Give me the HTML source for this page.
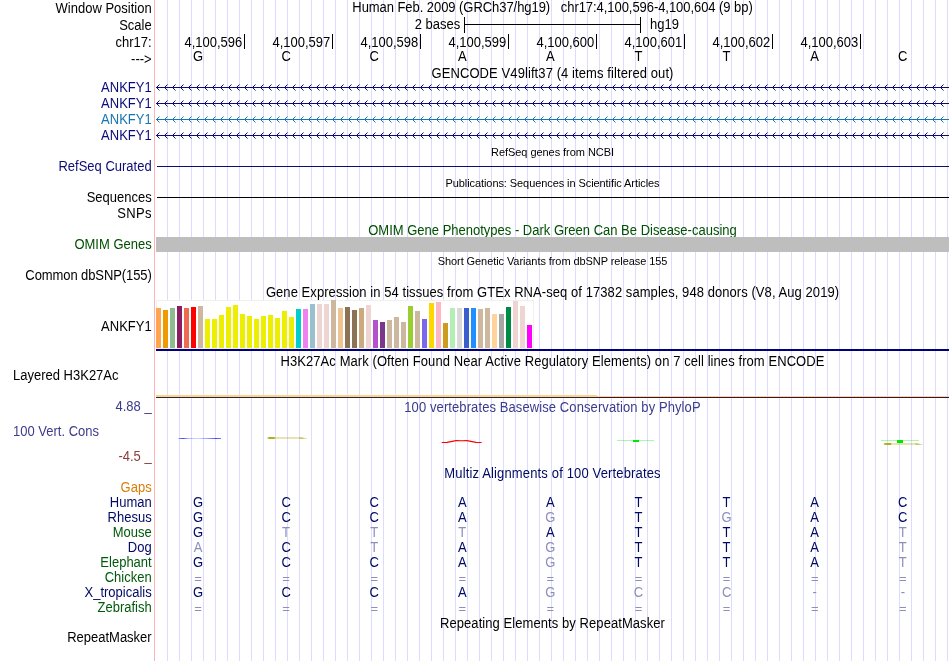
<!DOCTYPE html>
<html lang="en"><head><meta charset="utf-8"><title>UCSC Genome Browser chr17:4,100,596-4,100,604</title>
<style>
html,body{margin:0;padding:0;background:#fff;}
#c{will-change:transform;position:relative;width:950px;height:661px;overflow:hidden;background:#fff;font-family:"Liberation Sans",sans-serif;font-size:13px;color:#000;}
.t{position:absolute;white-space:pre;line-height:16px;height:16px;transform:scaleY(1.07);transform-origin:50% 12px;}
.r{text-align:right;left:0;width:151.7px;}
.c{text-align:center;left:155.5px;width:794px;}
.s{font-size:11px;transform-origin:50% 11px;}
.b{position:absolute;}
.g{position:absolute;top:0;width:1px;height:661px;background:#dcdcff;}
.l{width:12px;margin-left:-6px;text-align:center;}
.n{transform:none;}
svg{position:absolute;left:0;top:0;}
</style></head>
<body><div id="c">
<i class="g" style="left:167px"></i><i class="g" style="left:179px"></i><i class="g" style="left:191px"></i><i class="g" style="left:203px"></i><i class="g" style="left:215px"></i><i class="g" style="left:227px"></i><i class="g" style="left:239px"></i><i class="g" style="left:251px"></i><i class="g" style="left:263px"></i><i class="g" style="left:275px"></i><i class="g" style="left:287px"></i><i class="g" style="left:299px"></i><i class="g" style="left:311px"></i><i class="g" style="left:323px"></i><i class="g" style="left:335px"></i><i class="g" style="left:347px"></i><i class="g" style="left:359px"></i><i class="g" style="left:371px"></i><i class="g" style="left:383px"></i><i class="g" style="left:395px"></i><i class="g" style="left:407px"></i><i class="g" style="left:419px"></i><i class="g" style="left:431px"></i><i class="g" style="left:443px"></i><i class="g" style="left:455px"></i><i class="g" style="left:467px"></i><i class="g" style="left:479px"></i><i class="g" style="left:491px"></i><i class="g" style="left:503px"></i><i class="g" style="left:515px"></i><i class="g" style="left:527px"></i><i class="g" style="left:539px"></i><i class="g" style="left:551px"></i><i class="g" style="left:563px"></i><i class="g" style="left:575px"></i><i class="g" style="left:587px"></i><i class="g" style="left:599px"></i><i class="g" style="left:611px"></i><i class="g" style="left:623px"></i><i class="g" style="left:635px"></i><i class="g" style="left:647px"></i><i class="g" style="left:659px"></i><i class="g" style="left:671px"></i><i class="g" style="left:683px"></i><i class="g" style="left:695px"></i><i class="g" style="left:707px"></i><i class="g" style="left:719px"></i><i class="g" style="left:731px"></i><i class="g" style="left:743px"></i><i class="g" style="left:755px"></i><i class="g" style="left:767px"></i><i class="g" style="left:779px"></i><i class="g" style="left:791px"></i><i class="g" style="left:803px"></i><i class="g" style="left:815px"></i><i class="g" style="left:827px"></i><i class="g" style="left:839px"></i><i class="g" style="left:851px"></i><i class="g" style="left:863px"></i><i class="g" style="left:875px"></i><i class="g" style="left:887px"></i><i class="g" style="left:899px"></i><i class="g" style="left:911px"></i><i class="g" style="left:923px"></i><i class="g" style="left:935px"></i><i class="g" style="left:947px"></i>
<i class="b" style="left:154px;top:0;width:1px;height:661px;background:#ffb4b4"></i>
<div class="t r" style="top:1px;">Window Position</div>
<div class="t r" style="top:18px;">Scale</div>
<div class="t r" style="top:35px;">chr17:</div>
<div class="t r" style="top:52px;">---&gt;</div>
<div class="t c" style="top:0px;letter-spacing:-0.056px;">Human Feb. 2009 (GRCh37/hg19)   chr17:4,100,596-4,100,604 (9 bp)</div>
<div class="t" style="top:17px;left:260.3px;width:200px;text-align:right;">2 bases</div>
<i class="b" style="left:464px;top:24px;width:177px;height:1px;background:#000"></i>
<i class="b" style="left:464px;top:17px;width:1px;height:16px;background:#000"></i>
<i class="b" style="left:640px;top:17px;width:1px;height:16px;background:#000"></i>
<div class="t" style="top:17px;left:650px;">hg19</div>
<i class="b" style="left:244px;top:34px;width:1px;height:15px;background:#000"></i>
<div class="t" style="top:35px;left:42.3px;width:200px;text-align:right;">4,100,596</div>
<i class="b" style="left:332px;top:34px;width:1px;height:15px;background:#000"></i>
<div class="t" style="top:35px;left:130.3px;width:200px;text-align:right;">4,100,597</div>
<i class="b" style="left:420px;top:34px;width:1px;height:15px;background:#000"></i>
<div class="t" style="top:35px;left:218.3px;width:200px;text-align:right;">4,100,598</div>
<i class="b" style="left:508px;top:34px;width:1px;height:15px;background:#000"></i>
<div class="t" style="top:35px;left:306.3px;width:200px;text-align:right;">4,100,599</div>
<i class="b" style="left:596px;top:34px;width:1px;height:15px;background:#000"></i>
<div class="t" style="top:35px;left:394.3px;width:200px;text-align:right;">4,100,600</div>
<i class="b" style="left:684px;top:34px;width:1px;height:15px;background:#000"></i>
<div class="t" style="top:35px;left:482.3px;width:200px;text-align:right;">4,100,601</div>
<i class="b" style="left:772px;top:34px;width:1px;height:15px;background:#000"></i>
<div class="t" style="top:35px;left:570.3px;width:200px;text-align:right;">4,100,602</div>
<i class="b" style="left:860px;top:34px;width:1px;height:15px;background:#000"></i>
<div class="t" style="top:35px;left:658.3px;width:200px;text-align:right;">4,100,603</div>
<div class="t l" style="top:48.5px;left:198px;">G</div>
<div class="t l" style="top:48.5px;left:286.1px;">C</div>
<div class="t l" style="top:48.5px;left:374.2px;">C</div>
<div class="t l" style="top:48.5px;left:462.3px;">A</div>
<div class="t l" style="top:48.5px;left:550.4px;">A</div>
<div class="t l" style="top:48.5px;left:638.5px;">T</div>
<div class="t l" style="top:48.5px;left:726.6px;">T</div>
<div class="t l" style="top:48.5px;left:814.7px;">A</div>
<div class="t l" style="top:48.5px;left:902.8px;">C</div>
<div class="t c" style="top:66px;letter-spacing:0.09px;">GENCODE V49lift37 (4 items filtered out)</div>
<div class="t r" style="top:80px;color:#0c0c78;">ANKFY1</div>
<i class="b" style="left:156px;top:87px;width:793px;height:1px;background:#0c0c78"></i>
<div class="t r" style="top:96px;color:#0c0c78;">ANKFY1</div>
<i class="b" style="left:156px;top:103px;width:793px;height:1px;background:#0c0c78"></i>
<div class="t r" style="top:112px;color:#1776b0;">ANKFY1</div>
<i class="b" style="left:156px;top:119px;width:793px;height:1px;background:#1776b0"></i>
<div class="t r" style="top:128px;color:#0c0c78;">ANKFY1</div>
<i class="b" style="left:156px;top:135px;width:793px;height:1px;background:#0c0c78"></i>
<svg width="950" height="661" viewBox="0 0 950 661" fill="none"><path d="M159.5 84.5l-3 3 3 3M167.5 84.5l-3 3 3 3M175.5 84.5l-3 3 3 3M183.5 84.5l-3 3 3 3M191.5 84.5l-3 3 3 3M199.5 84.5l-3 3 3 3M207.5 84.5l-3 3 3 3M215.5 84.5l-3 3 3 3M223.5 84.5l-3 3 3 3M231.5 84.5l-3 3 3 3M239.5 84.5l-3 3 3 3M247.5 84.5l-3 3 3 3M255.5 84.5l-3 3 3 3M263.5 84.5l-3 3 3 3M271.5 84.5l-3 3 3 3M279.5 84.5l-3 3 3 3M287.5 84.5l-3 3 3 3M295.5 84.5l-3 3 3 3M303.5 84.5l-3 3 3 3M311.5 84.5l-3 3 3 3M319.5 84.5l-3 3 3 3M327.5 84.5l-3 3 3 3M335.5 84.5l-3 3 3 3M343.5 84.5l-3 3 3 3M351.5 84.5l-3 3 3 3M359.5 84.5l-3 3 3 3M367.5 84.5l-3 3 3 3M375.5 84.5l-3 3 3 3M383.5 84.5l-3 3 3 3M391.5 84.5l-3 3 3 3M399.5 84.5l-3 3 3 3M407.5 84.5l-3 3 3 3M415.5 84.5l-3 3 3 3M423.5 84.5l-3 3 3 3M431.5 84.5l-3 3 3 3M439.5 84.5l-3 3 3 3M447.5 84.5l-3 3 3 3M455.5 84.5l-3 3 3 3M463.5 84.5l-3 3 3 3M471.5 84.5l-3 3 3 3M479.5 84.5l-3 3 3 3M487.5 84.5l-3 3 3 3M495.5 84.5l-3 3 3 3M503.5 84.5l-3 3 3 3M511.5 84.5l-3 3 3 3M519.5 84.5l-3 3 3 3M527.5 84.5l-3 3 3 3M535.5 84.5l-3 3 3 3M543.5 84.5l-3 3 3 3M551.5 84.5l-3 3 3 3M559.5 84.5l-3 3 3 3M567.5 84.5l-3 3 3 3M575.5 84.5l-3 3 3 3M583.5 84.5l-3 3 3 3M591.5 84.5l-3 3 3 3M599.5 84.5l-3 3 3 3M607.5 84.5l-3 3 3 3M615.5 84.5l-3 3 3 3M623.5 84.5l-3 3 3 3M631.5 84.5l-3 3 3 3M639.5 84.5l-3 3 3 3M647.5 84.5l-3 3 3 3M655.5 84.5l-3 3 3 3M663.5 84.5l-3 3 3 3M671.5 84.5l-3 3 3 3M679.5 84.5l-3 3 3 3M687.5 84.5l-3 3 3 3M695.5 84.5l-3 3 3 3M703.5 84.5l-3 3 3 3M711.5 84.5l-3 3 3 3M719.5 84.5l-3 3 3 3M727.5 84.5l-3 3 3 3M735.5 84.5l-3 3 3 3M743.5 84.5l-3 3 3 3M751.5 84.5l-3 3 3 3M759.5 84.5l-3 3 3 3M767.5 84.5l-3 3 3 3M775.5 84.5l-3 3 3 3M783.5 84.5l-3 3 3 3M791.5 84.5l-3 3 3 3M799.5 84.5l-3 3 3 3M807.5 84.5l-3 3 3 3M815.5 84.5l-3 3 3 3M823.5 84.5l-3 3 3 3M831.5 84.5l-3 3 3 3M839.5 84.5l-3 3 3 3M847.5 84.5l-3 3 3 3M855.5 84.5l-3 3 3 3M863.5 84.5l-3 3 3 3M871.5 84.5l-3 3 3 3M879.5 84.5l-3 3 3 3M887.5 84.5l-3 3 3 3M895.5 84.5l-3 3 3 3M903.5 84.5l-3 3 3 3M911.5 84.5l-3 3 3 3M919.5 84.5l-3 3 3 3M927.5 84.5l-3 3 3 3M935.5 84.5l-3 3 3 3M943.5 84.5l-3 3 3 3" stroke="#0c0c78" stroke-width="1"/><path d="M159.5 100.5l-3 3 3 3M167.5 100.5l-3 3 3 3M175.5 100.5l-3 3 3 3M183.5 100.5l-3 3 3 3M191.5 100.5l-3 3 3 3M199.5 100.5l-3 3 3 3M207.5 100.5l-3 3 3 3M215.5 100.5l-3 3 3 3M223.5 100.5l-3 3 3 3M231.5 100.5l-3 3 3 3M239.5 100.5l-3 3 3 3M247.5 100.5l-3 3 3 3M255.5 100.5l-3 3 3 3M263.5 100.5l-3 3 3 3M271.5 100.5l-3 3 3 3M279.5 100.5l-3 3 3 3M287.5 100.5l-3 3 3 3M295.5 100.5l-3 3 3 3M303.5 100.5l-3 3 3 3M311.5 100.5l-3 3 3 3M319.5 100.5l-3 3 3 3M327.5 100.5l-3 3 3 3M335.5 100.5l-3 3 3 3M343.5 100.5l-3 3 3 3M351.5 100.5l-3 3 3 3M359.5 100.5l-3 3 3 3M367.5 100.5l-3 3 3 3M375.5 100.5l-3 3 3 3M383.5 100.5l-3 3 3 3M391.5 100.5l-3 3 3 3M399.5 100.5l-3 3 3 3M407.5 100.5l-3 3 3 3M415.5 100.5l-3 3 3 3M423.5 100.5l-3 3 3 3M431.5 100.5l-3 3 3 3M439.5 100.5l-3 3 3 3M447.5 100.5l-3 3 3 3M455.5 100.5l-3 3 3 3M463.5 100.5l-3 3 3 3M471.5 100.5l-3 3 3 3M479.5 100.5l-3 3 3 3M487.5 100.5l-3 3 3 3M495.5 100.5l-3 3 3 3M503.5 100.5l-3 3 3 3M511.5 100.5l-3 3 3 3M519.5 100.5l-3 3 3 3M527.5 100.5l-3 3 3 3M535.5 100.5l-3 3 3 3M543.5 100.5l-3 3 3 3M551.5 100.5l-3 3 3 3M559.5 100.5l-3 3 3 3M567.5 100.5l-3 3 3 3M575.5 100.5l-3 3 3 3M583.5 100.5l-3 3 3 3M591.5 100.5l-3 3 3 3M599.5 100.5l-3 3 3 3M607.5 100.5l-3 3 3 3M615.5 100.5l-3 3 3 3M623.5 100.5l-3 3 3 3M631.5 100.5l-3 3 3 3M639.5 100.5l-3 3 3 3M647.5 100.5l-3 3 3 3M655.5 100.5l-3 3 3 3M663.5 100.5l-3 3 3 3M671.5 100.5l-3 3 3 3M679.5 100.5l-3 3 3 3M687.5 100.5l-3 3 3 3M695.5 100.5l-3 3 3 3M703.5 100.5l-3 3 3 3M711.5 100.5l-3 3 3 3M719.5 100.5l-3 3 3 3M727.5 100.5l-3 3 3 3M735.5 100.5l-3 3 3 3M743.5 100.5l-3 3 3 3M751.5 100.5l-3 3 3 3M759.5 100.5l-3 3 3 3M767.5 100.5l-3 3 3 3M775.5 100.5l-3 3 3 3M783.5 100.5l-3 3 3 3M791.5 100.5l-3 3 3 3M799.5 100.5l-3 3 3 3M807.5 100.5l-3 3 3 3M815.5 100.5l-3 3 3 3M823.5 100.5l-3 3 3 3M831.5 100.5l-3 3 3 3M839.5 100.5l-3 3 3 3M847.5 100.5l-3 3 3 3M855.5 100.5l-3 3 3 3M863.5 100.5l-3 3 3 3M871.5 100.5l-3 3 3 3M879.5 100.5l-3 3 3 3M887.5 100.5l-3 3 3 3M895.5 100.5l-3 3 3 3M903.5 100.5l-3 3 3 3M911.5 100.5l-3 3 3 3M919.5 100.5l-3 3 3 3M927.5 100.5l-3 3 3 3M935.5 100.5l-3 3 3 3M943.5 100.5l-3 3 3 3" stroke="#0c0c78" stroke-width="1"/><path d="M159.5 116.5l-3 3 3 3M167.5 116.5l-3 3 3 3M175.5 116.5l-3 3 3 3M183.5 116.5l-3 3 3 3M191.5 116.5l-3 3 3 3M199.5 116.5l-3 3 3 3M207.5 116.5l-3 3 3 3M215.5 116.5l-3 3 3 3M223.5 116.5l-3 3 3 3M231.5 116.5l-3 3 3 3M239.5 116.5l-3 3 3 3M247.5 116.5l-3 3 3 3M255.5 116.5l-3 3 3 3M263.5 116.5l-3 3 3 3M271.5 116.5l-3 3 3 3M279.5 116.5l-3 3 3 3M287.5 116.5l-3 3 3 3M295.5 116.5l-3 3 3 3M303.5 116.5l-3 3 3 3M311.5 116.5l-3 3 3 3M319.5 116.5l-3 3 3 3M327.5 116.5l-3 3 3 3M335.5 116.5l-3 3 3 3M343.5 116.5l-3 3 3 3M351.5 116.5l-3 3 3 3M359.5 116.5l-3 3 3 3M367.5 116.5l-3 3 3 3M375.5 116.5l-3 3 3 3M383.5 116.5l-3 3 3 3M391.5 116.5l-3 3 3 3M399.5 116.5l-3 3 3 3M407.5 116.5l-3 3 3 3M415.5 116.5l-3 3 3 3M423.5 116.5l-3 3 3 3M431.5 116.5l-3 3 3 3M439.5 116.5l-3 3 3 3M447.5 116.5l-3 3 3 3M455.5 116.5l-3 3 3 3M463.5 116.5l-3 3 3 3M471.5 116.5l-3 3 3 3M479.5 116.5l-3 3 3 3M487.5 116.5l-3 3 3 3M495.5 116.5l-3 3 3 3M503.5 116.5l-3 3 3 3M511.5 116.5l-3 3 3 3M519.5 116.5l-3 3 3 3M527.5 116.5l-3 3 3 3M535.5 116.5l-3 3 3 3M543.5 116.5l-3 3 3 3M551.5 116.5l-3 3 3 3M559.5 116.5l-3 3 3 3M567.5 116.5l-3 3 3 3M575.5 116.5l-3 3 3 3M583.5 116.5l-3 3 3 3M591.5 116.5l-3 3 3 3M599.5 116.5l-3 3 3 3M607.5 116.5l-3 3 3 3M615.5 116.5l-3 3 3 3M623.5 116.5l-3 3 3 3M631.5 116.5l-3 3 3 3M639.5 116.5l-3 3 3 3M647.5 116.5l-3 3 3 3M655.5 116.5l-3 3 3 3M663.5 116.5l-3 3 3 3M671.5 116.5l-3 3 3 3M679.5 116.5l-3 3 3 3M687.5 116.5l-3 3 3 3M695.5 116.5l-3 3 3 3M703.5 116.5l-3 3 3 3M711.5 116.5l-3 3 3 3M719.5 116.5l-3 3 3 3M727.5 116.5l-3 3 3 3M735.5 116.5l-3 3 3 3M743.5 116.5l-3 3 3 3M751.5 116.5l-3 3 3 3M759.5 116.5l-3 3 3 3M767.5 116.5l-3 3 3 3M775.5 116.5l-3 3 3 3M783.5 116.5l-3 3 3 3M791.5 116.5l-3 3 3 3M799.5 116.5l-3 3 3 3M807.5 116.5l-3 3 3 3M815.5 116.5l-3 3 3 3M823.5 116.5l-3 3 3 3M831.5 116.5l-3 3 3 3M839.5 116.5l-3 3 3 3M847.5 116.5l-3 3 3 3M855.5 116.5l-3 3 3 3M863.5 116.5l-3 3 3 3M871.5 116.5l-3 3 3 3M879.5 116.5l-3 3 3 3M887.5 116.5l-3 3 3 3M895.5 116.5l-3 3 3 3M903.5 116.5l-3 3 3 3M911.5 116.5l-3 3 3 3M919.5 116.5l-3 3 3 3M927.5 116.5l-3 3 3 3M935.5 116.5l-3 3 3 3M943.5 116.5l-3 3 3 3" stroke="#1776b0" stroke-width="1"/><path d="M159.5 132.5l-3 3 3 3M167.5 132.5l-3 3 3 3M175.5 132.5l-3 3 3 3M183.5 132.5l-3 3 3 3M191.5 132.5l-3 3 3 3M199.5 132.5l-3 3 3 3M207.5 132.5l-3 3 3 3M215.5 132.5l-3 3 3 3M223.5 132.5l-3 3 3 3M231.5 132.5l-3 3 3 3M239.5 132.5l-3 3 3 3M247.5 132.5l-3 3 3 3M255.5 132.5l-3 3 3 3M263.5 132.5l-3 3 3 3M271.5 132.5l-3 3 3 3M279.5 132.5l-3 3 3 3M287.5 132.5l-3 3 3 3M295.5 132.5l-3 3 3 3M303.5 132.5l-3 3 3 3M311.5 132.5l-3 3 3 3M319.5 132.5l-3 3 3 3M327.5 132.5l-3 3 3 3M335.5 132.5l-3 3 3 3M343.5 132.5l-3 3 3 3M351.5 132.5l-3 3 3 3M359.5 132.5l-3 3 3 3M367.5 132.5l-3 3 3 3M375.5 132.5l-3 3 3 3M383.5 132.5l-3 3 3 3M391.5 132.5l-3 3 3 3M399.5 132.5l-3 3 3 3M407.5 132.5l-3 3 3 3M415.5 132.5l-3 3 3 3M423.5 132.5l-3 3 3 3M431.5 132.5l-3 3 3 3M439.5 132.5l-3 3 3 3M447.5 132.5l-3 3 3 3M455.5 132.5l-3 3 3 3M463.5 132.5l-3 3 3 3M471.5 132.5l-3 3 3 3M479.5 132.5l-3 3 3 3M487.5 132.5l-3 3 3 3M495.5 132.5l-3 3 3 3M503.5 132.5l-3 3 3 3M511.5 132.5l-3 3 3 3M519.5 132.5l-3 3 3 3M527.5 132.5l-3 3 3 3M535.5 132.5l-3 3 3 3M543.5 132.5l-3 3 3 3M551.5 132.5l-3 3 3 3M559.5 132.5l-3 3 3 3M567.5 132.5l-3 3 3 3M575.5 132.5l-3 3 3 3M583.5 132.5l-3 3 3 3M591.5 132.5l-3 3 3 3M599.5 132.5l-3 3 3 3M607.5 132.5l-3 3 3 3M615.5 132.5l-3 3 3 3M623.5 132.5l-3 3 3 3M631.5 132.5l-3 3 3 3M639.5 132.5l-3 3 3 3M647.5 132.5l-3 3 3 3M655.5 132.5l-3 3 3 3M663.5 132.5l-3 3 3 3M671.5 132.5l-3 3 3 3M679.5 132.5l-3 3 3 3M687.5 132.5l-3 3 3 3M695.5 132.5l-3 3 3 3M703.5 132.5l-3 3 3 3M711.5 132.5l-3 3 3 3M719.5 132.5l-3 3 3 3M727.5 132.5l-3 3 3 3M735.5 132.5l-3 3 3 3M743.5 132.5l-3 3 3 3M751.5 132.5l-3 3 3 3M759.5 132.5l-3 3 3 3M767.5 132.5l-3 3 3 3M775.5 132.5l-3 3 3 3M783.5 132.5l-3 3 3 3M791.5 132.5l-3 3 3 3M799.5 132.5l-3 3 3 3M807.5 132.5l-3 3 3 3M815.5 132.5l-3 3 3 3M823.5 132.5l-3 3 3 3M831.5 132.5l-3 3 3 3M839.5 132.5l-3 3 3 3M847.5 132.5l-3 3 3 3M855.5 132.5l-3 3 3 3M863.5 132.5l-3 3 3 3M871.5 132.5l-3 3 3 3M879.5 132.5l-3 3 3 3M887.5 132.5l-3 3 3 3M895.5 132.5l-3 3 3 3M903.5 132.5l-3 3 3 3M911.5 132.5l-3 3 3 3M919.5 132.5l-3 3 3 3M927.5 132.5l-3 3 3 3M935.5 132.5l-3 3 3 3M943.5 132.5l-3 3 3 3" stroke="#0c0c78" stroke-width="1"/></svg>
<div class="t c s" style="top:144px;letter-spacing:-0.05px;">RefSeq genes from NCBI</div>
<div class="t r" style="top:159px;color:#0c0c78;">RefSeq Curated</div>
<i class="b" style="left:157px;top:166px;width:792px;height:1px;background:#0c0c78"></i>
<div class="t c s" style="top:175px;letter-spacing:-0.08px;">Publications: Sequences in Scientific Articles</div>
<div class="t r" style="top:190px;">Sequences</div>
<i class="b" style="left:157px;top:197px;width:792px;height:1px;background:#000"></i>
<div class="t r" style="top:206px;letter-spacing:0.3px;">SNPs</div>
<div class="t c" style="top:223px;color:#005000;">OMIM Gene Phenotypes - Dark Green Can Be Disease-causing</div>
<div class="t r" style="top:237px;color:#005000;">OMIM Genes</div>
<i class="b" style="left:156px;top:237px;width:793px;height:15px;background:#bebebe"></i>
<div class="t c s" style="top:253px;letter-spacing:-0.08px;">Short Genetic Variants from dbSNP release 155</div>
<div class="t r" style="top:268px;letter-spacing:-0.09px;">Common dbSNP(155)</div>
<div class="t c" style="top:285px;letter-spacing:0.066px;">Gene Expression in 54 tissues from GTEx RNA-seq of 17382 samples, 948 donors (V8, Aug 2019)</div>
<div class="t r" style="top:319px;">ANKFY1</div>
<i class="b" style="left:156px;top:300px;width:378px;height:49px;background:#fff;box-shadow:inset 0 0 0 1px #f0f0f0"></i>
<i class="b" style="left:156px;top:308px;width:5px;height:40px;background:#ffa54f"></i>
<i class="b" style="left:163px;top:310px;width:5px;height:38px;background:#ee9a00"></i>
<i class="b" style="left:170px;top:308px;width:5px;height:40px;background:#8fbc8f"></i>
<i class="b" style="left:177px;top:306px;width:5px;height:42px;background:#8b1c62"></i>
<i class="b" style="left:184px;top:308px;width:5px;height:40px;background:#ee6a50"></i>
<i class="b" style="left:191px;top:307px;width:5px;height:41px;background:#ff0000"></i>
<i class="b" style="left:198px;top:306px;width:5px;height:42px;background:#cdb79e"></i>
<i class="b" style="left:205px;top:319px;width:5px;height:29px;background:#eeee00"></i>
<i class="b" style="left:212px;top:319px;width:5px;height:29px;background:#eeee00"></i>
<i class="b" style="left:219px;top:315px;width:5px;height:33px;background:#eeee00"></i>
<i class="b" style="left:226px;top:307px;width:5px;height:41px;background:#eeee00"></i>
<i class="b" style="left:233px;top:305px;width:5px;height:43px;background:#eeee00"></i>
<i class="b" style="left:240px;top:314px;width:5px;height:34px;background:#eeee00"></i>
<i class="b" style="left:247px;top:316px;width:5px;height:32px;background:#eeee00"></i>
<i class="b" style="left:254px;top:319px;width:5px;height:29px;background:#eeee00"></i>
<i class="b" style="left:261px;top:316px;width:5px;height:32px;background:#eeee00"></i>
<i class="b" style="left:268px;top:315px;width:5px;height:33px;background:#eeee00"></i>
<i class="b" style="left:275px;top:318px;width:5px;height:30px;background:#eeee00"></i>
<i class="b" style="left:282px;top:311px;width:5px;height:37px;background:#eeee00"></i>
<i class="b" style="left:289px;top:317px;width:5px;height:31px;background:#eeee00"></i>
<i class="b" style="left:296px;top:309px;width:5px;height:39px;background:#00cdcd"></i>
<i class="b" style="left:303px;top:309px;width:5px;height:39px;background:#ee82ee"></i>
<i class="b" style="left:310px;top:304px;width:5px;height:44px;background:#9ac0cd"></i>
<i class="b" style="left:317px;top:304px;width:5px;height:44px;background:#eed5d2"></i>
<i class="b" style="left:324px;top:304px;width:5px;height:44px;background:#eed5d2"></i>
<i class="b" style="left:331px;top:300px;width:5px;height:48px;background:#cdb79e"></i>
<i class="b" style="left:338px;top:308px;width:5px;height:40px;background:#eec591"></i>
<i class="b" style="left:345px;top:307px;width:5px;height:41px;background:#8b7355"></i>
<i class="b" style="left:352px;top:310px;width:5px;height:38px;background:#8b7355"></i>
<i class="b" style="left:359px;top:308px;width:5px;height:40px;background:#cdaa7d"></i>
<i class="b" style="left:366px;top:305px;width:5px;height:43px;background:#eed5d2"></i>
<i class="b" style="left:373px;top:320px;width:5px;height:28px;background:#b452cd"></i>
<i class="b" style="left:380px;top:322px;width:5px;height:26px;background:#7a378b"></i>
<i class="b" style="left:387px;top:320px;width:5px;height:28px;background:#cdb79e"></i>
<i class="b" style="left:394px;top:317px;width:5px;height:31px;background:#cdb79e"></i>
<i class="b" style="left:401px;top:322px;width:5px;height:26px;background:#cdb79e"></i>
<i class="b" style="left:408px;top:306px;width:5px;height:42px;background:#9acd32"></i>
<i class="b" style="left:415px;top:311px;width:5px;height:37px;background:#cdb79e"></i>
<i class="b" style="left:422px;top:319px;width:5px;height:29px;background:#7a67ee"></i>
<i class="b" style="left:429px;top:303px;width:5px;height:45px;background:#ffd700"></i>
<i class="b" style="left:436px;top:302px;width:5px;height:46px;background:#ffb6c1"></i>
<i class="b" style="left:443px;top:323px;width:5px;height:25px;background:#cd9b1d"></i>
<i class="b" style="left:450px;top:308px;width:5px;height:40px;background:#b4eeb4"></i>
<i class="b" style="left:457px;top:308px;width:5px;height:40px;background:#d9d9d9"></i>
<i class="b" style="left:464px;top:308px;width:5px;height:40px;background:#3a5fcd"></i>
<i class="b" style="left:471px;top:308px;width:5px;height:40px;background:#1e90ff"></i>
<i class="b" style="left:478px;top:309px;width:5px;height:39px;background:#cdb79e"></i>
<i class="b" style="left:485px;top:308px;width:5px;height:40px;background:#cdb79e"></i>
<i class="b" style="left:492px;top:314px;width:5px;height:34px;background:#ffd39b"></i>
<i class="b" style="left:499px;top:314px;width:5px;height:34px;background:#a6a6a6"></i>
<i class="b" style="left:506px;top:307px;width:5px;height:41px;background:#008b45"></i>
<i class="b" style="left:513px;top:301px;width:5px;height:47px;background:#eed5d2"></i>
<i class="b" style="left:520px;top:306px;width:5px;height:42px;background:#eed5d2"></i>
<i class="b" style="left:527px;top:325px;width:5px;height:23px;background:#ff00ff"></i>
<i class="b" style="left:156px;top:349px;width:793px;height:2px;background:#00007d"></i>
<div class="t c" style="top:354px;letter-spacing:0.075px;">H3K27Ac Mark (Often Found Near Active Regulatory Elements) on 7 cell lines from ENCODE</div>
<div class="t" style="top:368px;left:13px;">Layered H3K27Ac</div>
<i class="b" style="left:156px;top:395px;width:441px;height:2px;background:#ffd47a"></i>
<i class="b" style="left:597px;top:396px;width:352px;height:1px;background:#ffd47a"></i>
<i class="b" style="left:156px;top:397px;width:441px;height:1px;background:#1e2850"></i>
<i class="b" style="left:597px;top:397px;width:352px;height:1px;background:#301450"></i>
<div class="t c" style="top:400px;color:#3c3c8c;letter-spacing:0.095px;">100 vertebrates Basewise Conservation by PhyloP</div>
<div class="t r" style="top:399px;color:#3c3c8c;">4.88 _</div>
<div class="t" style="top:424px;left:13px;color:#3c3c8c;">100 Vert. Cons</div>
<div class="t r" style="top:449px;color:#8c3c3c;">-4.5 _</div>
<svg width="950" height="661" viewBox="0 0 950 661" fill="none"><defs><linearGradient id="gb" x1="0" x2="1" y1="0" y2="0"><stop offset="0" stop-color="#00f" stop-opacity=".4"/><stop offset=".1" stop-color="#00f" stop-opacity=".75"/><stop offset=".22" stop-color="#00f" stop-opacity=".3"/><stop offset=".45" stop-color="#00f" stop-opacity=".16"/><stop offset=".7" stop-color="#00f" stop-opacity=".4"/><stop offset=".88" stop-color="#00f" stop-opacity=".7"/><stop offset="1" stop-color="#00f" stop-opacity=".55"/></linearGradient><linearGradient id="go" x1="0" x2="1" y1="0" y2="0"><stop offset="0" stop-color="#a8a800" stop-opacity=".5"/><stop offset=".05" stop-color="#a8a800" stop-opacity=".9"/><stop offset=".17" stop-color="#a8a800" stop-opacity=".9"/><stop offset=".2" stop-color="#a8a800" stop-opacity=".3"/><stop offset=".78" stop-color="#a8a800" stop-opacity=".3"/><stop offset=".84" stop-color="#a8a800" stop-opacity=".7"/><stop offset="1" stop-color="#a8a800" stop-opacity=".25"/></linearGradient></defs><rect x="178.6" y="438" width="42.4" height="1" fill="url(#gb)"/><path d="M267.5 437H300L307.4 438.4V439H267.5Z" fill="url(#go)"/><path d="M441.7 442.5L447 442.4 456 440.6 461.5 440.7 467 440.6 476 442.4 481.7 442.5" stroke="#ff0000" stroke-width="1.1" stroke-linejoin="round"/><path d="M617 440.5H654" stroke="#00e600" stroke-opacity=".33" stroke-width="1"/><rect x="633" y="440" width="6" height="2" fill="#00e600"/><path d="M881 440.5H919" stroke="#00e600" stroke-opacity=".33" stroke-width="1"/><rect x="897" y="440" width="6" height="3" fill="#00e600"/><path d="M883.8 443H916L923.2 444.4V445H883.8Z" fill="url(#go)"/></svg>
<div class="t c" style="top:466px;color:#000a64;letter-spacing:0.15px;">Multiz Alignments of 100 Vertebrates</div>
<div class="t r" style="top:480px;color:#dc7d05;">Gaps</div>
<div class="t r" style="top:495px;color:#000a64;">Human</div>
<div class="t l" style="top:495px;left:198px;color:#000a64;">G</div>
<div class="t l" style="top:495px;left:286.1px;color:#000a64;">C</div>
<div class="t l" style="top:495px;left:374.2px;color:#000a64;">C</div>
<div class="t l" style="top:495px;left:462.3px;color:#000a64;">A</div>
<div class="t l" style="top:495px;left:550.4px;color:#000a64;">A</div>
<div class="t l" style="top:495px;left:638.5px;color:#000a64;">T</div>
<div class="t l" style="top:495px;left:726.6px;color:#000a64;">T</div>
<div class="t l" style="top:495px;left:814.7px;color:#000a64;">A</div>
<div class="t l" style="top:495px;left:902.8px;color:#000a64;">C</div>
<div class="t r" style="top:510px;color:#000a64;">Rhesus</div>
<div class="t l" style="top:510px;left:198px;color:#000a64;">G</div>
<div class="t l" style="top:510px;left:286.1px;color:#000a64;">C</div>
<div class="t l" style="top:510px;left:374.2px;color:#000a64;">C</div>
<div class="t l" style="top:510px;left:462.3px;color:#000a64;">A</div>
<div class="t l" style="top:510px;left:550.4px;color:#8e8ebc;">G</div>
<div class="t l" style="top:510px;left:638.5px;color:#000a64;">T</div>
<div class="t l" style="top:510px;left:726.6px;color:#8e8ebc;">G</div>
<div class="t l" style="top:510px;left:814.7px;color:#000a64;">A</div>
<div class="t l" style="top:510px;left:902.8px;color:#000a64;">C</div>
<div class="t r" style="top:525px;color:#005a0a;">Mouse</div>
<div class="t l" style="top:525px;left:198px;color:#000a64;">G</div>
<div class="t l" style="top:525px;left:286.1px;color:#8e8ebc;">T</div>
<div class="t l" style="top:525px;left:374.2px;color:#8e8ebc;">T</div>
<div class="t l" style="top:525px;left:462.3px;color:#8e8ebc;">T</div>
<div class="t l" style="top:525px;left:550.4px;color:#000a64;">A</div>
<div class="t l" style="top:525px;left:638.5px;color:#000a64;">T</div>
<div class="t l" style="top:525px;left:726.6px;color:#000a64;">T</div>
<div class="t l" style="top:525px;left:814.7px;color:#000a64;">A</div>
<div class="t l" style="top:525px;left:902.8px;color:#8e8ebc;">T</div>
<div class="t r" style="top:540px;color:#000a64;">Dog</div>
<div class="t l" style="top:540px;left:198px;color:#8e8ebc;">A</div>
<div class="t l" style="top:540px;left:286.1px;color:#000a64;">C</div>
<div class="t l" style="top:540px;left:374.2px;color:#8e8ebc;">T</div>
<div class="t l" style="top:540px;left:462.3px;color:#000a64;">A</div>
<div class="t l" style="top:540px;left:550.4px;color:#8e8ebc;">G</div>
<div class="t l" style="top:540px;left:638.5px;color:#000a64;">T</div>
<div class="t l" style="top:540px;left:726.6px;color:#000a64;">T</div>
<div class="t l" style="top:540px;left:814.7px;color:#000a64;">A</div>
<div class="t l" style="top:540px;left:902.8px;color:#8e8ebc;">T</div>
<div class="t r" style="top:555px;color:#005a0a;">Elephant</div>
<div class="t l" style="top:555px;left:198px;color:#000a64;">G</div>
<div class="t l" style="top:555px;left:286.1px;color:#000a64;">C</div>
<div class="t l" style="top:555px;left:374.2px;color:#000a64;">C</div>
<div class="t l" style="top:555px;left:462.3px;color:#000a64;">A</div>
<div class="t l" style="top:555px;left:550.4px;color:#8e8ebc;">G</div>
<div class="t l" style="top:555px;left:638.5px;color:#000a64;">T</div>
<div class="t l" style="top:555px;left:726.6px;color:#000a64;">T</div>
<div class="t l" style="top:555px;left:814.7px;color:#000a64;">A</div>
<div class="t l" style="top:555px;left:902.8px;color:#8e8ebc;">T</div>
<div class="t r" style="top:570px;color:#005a0a;">Chicken</div>
<div class="t l n" style="top:571px;left:198px;color:#8e8ebc;">=</div>
<div class="t l n" style="top:571px;left:286.1px;color:#8e8ebc;">=</div>
<div class="t l n" style="top:571px;left:374.2px;color:#8e8ebc;">=</div>
<div class="t l n" style="top:571px;left:462.3px;color:#8e8ebc;">=</div>
<div class="t l n" style="top:571px;left:550.4px;color:#8e8ebc;">=</div>
<div class="t l n" style="top:571px;left:638.5px;color:#8e8ebc;">=</div>
<div class="t l n" style="top:571px;left:726.6px;color:#8e8ebc;">=</div>
<div class="t l n" style="top:571px;left:814.7px;color:#8e8ebc;">=</div>
<div class="t l n" style="top:571px;left:902.8px;color:#8e8ebc;">=</div>
<div class="t r" style="top:585px;color:#000a64;">X_tropicalis</div>
<div class="t l" style="top:585px;left:198px;color:#000a64;">G</div>
<div class="t l" style="top:585px;left:286.1px;color:#000a64;">C</div>
<div class="t l" style="top:585px;left:374.2px;color:#000a64;">C</div>
<div class="t l" style="top:585px;left:462.3px;color:#000a64;">A</div>
<div class="t l" style="top:585px;left:550.4px;color:#8e8ebc;">G</div>
<div class="t l" style="top:585px;left:638.5px;color:#8e8ebc;">C</div>
<div class="t l" style="top:585px;left:726.6px;color:#8e8ebc;">C</div>
<div class="t l" style="top:585px;left:814.7px;color:#8e8ebc;">-</div>
<div class="t l" style="top:585px;left:902.8px;color:#8e8ebc;">-</div>
<div class="t r" style="top:600px;color:#005a0a;">Zebrafish</div>
<div class="t l n" style="top:601px;left:198px;color:#8e8ebc;">=</div>
<div class="t l n" style="top:601px;left:286.1px;color:#8e8ebc;">=</div>
<div class="t l n" style="top:601px;left:374.2px;color:#8e8ebc;">=</div>
<div class="t l n" style="top:601px;left:462.3px;color:#8e8ebc;">=</div>
<div class="t l n" style="top:601px;left:550.4px;color:#8e8ebc;">=</div>
<div class="t l n" style="top:601px;left:638.5px;color:#8e8ebc;">=</div>
<div class="t l n" style="top:601px;left:726.6px;color:#8e8ebc;">=</div>
<div class="t l n" style="top:601px;left:814.7px;color:#8e8ebc;">=</div>
<div class="t l n" style="top:601px;left:902.8px;color:#8e8ebc;">=</div>
<div class="t c" style="top:616px;letter-spacing:0.07px;">Repeating Elements by RepeatMasker</div>
<div class="t r" style="top:630px;">RepeatMasker</div>
</div></body></html>
